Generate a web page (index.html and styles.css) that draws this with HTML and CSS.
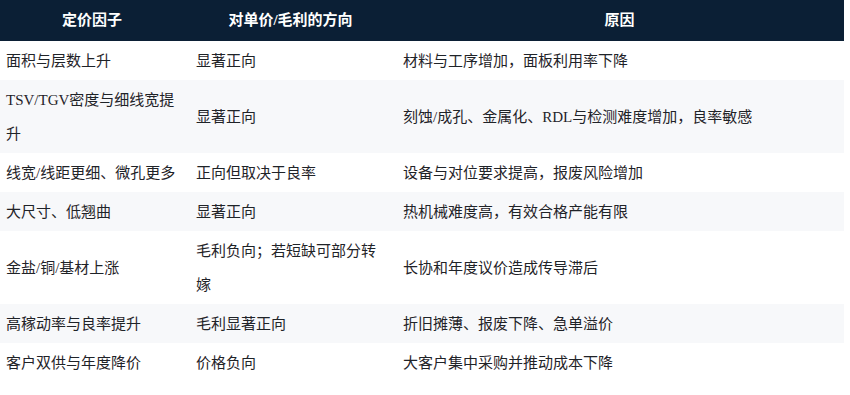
FILE: index.html
```html
<!DOCTYPE html>
<html lang="zh-CN">
<head>
<meta charset="utf-8">
<link rel="stylesheet" href="styles.css">
</head>
<body>
<table class="grid">
  <colgroup>
    <col class="c1"><col class="c2"><col class="c3">
  </colgroup>
  <thead>
    <tr><th class="p1">定价因子</th><th class="p2">对单价/毛利的方向</th><th class="p3">原因</th></tr>
  </thead>
  <tbody>
    <tr><td class="p1">面积与层数上升</td><td class="p2">显著正向</td><td class="p3">材料与工序增加，面板利用率下降</td></tr>
    <tr><td class="p1">TSV/TGV密度与细线宽提升</td><td class="p2">显著正向</td><td class="p3">刻蚀/成孔、金属化、RDL与检测难度增加，良率敏感</td></tr>
    <tr><td class="p1">线宽/线距更细、微孔更多</td><td class="p2">正向但取决于良率</td><td class="p3">设备与对位要求提高，报废风险增加</td></tr>
    <tr><td class="p1">大尺寸、低翘曲</td><td class="p2">显著正向</td><td class="p3">热机械难度高，有效合格产能有限</td></tr>
    <tr><td class="p1">金盐/铜/基材上涨</td><td class="p2">毛利负向；若短缺可部分转嫁</td><td class="p3">长协和年度议价造成传导滞后</td></tr>
    <tr><td class="p1">高稼动率与良率提升</td><td class="p2">毛利显著正向</td><td class="p3">折旧摊薄、报废下降、急单溢价</td></tr>
    <tr><td class="p1">客户双供与年度降价</td><td class="p2">价格负向</td><td class="p3">大客户集中采购并推动成本下降</td></tr>
  </tbody>
</table>
</body>
</html>
```
FILE: styles.css
```css
html, body {
  margin: 0;
  padding: 0;
  background: #ffffff;
}
.grid {
  width: 844px;
  border-collapse: collapse;
  table-layout: fixed;
  font-family: "Liberation Serif", "Noto Sans CJK SC", serif;
  font-size: 15px;
  color: #1f2328;
}
.c1 { width: 190px; }
.c2 { width: 207px; }
.c3 { width: 447px; }
.grid th {
  background: #0b1f35;
  color: #ffffff;
  font-weight: 700;
  text-align: center;
  height: 41px;
  padding: 0;
  line-height: 41px;
}
.grid td {
  line-height: 34px;
  padding: 2.5px 0;
  text-align: left;
  vertical-align: middle;
}
.p1, .p2 { padding-left: 6px !important; padding-right: 12px !important; }
.p3 { padding-left: 6px !important; padding-right: 8px !important; }
.grid tbody tr:nth-child(even) td {
  background: #f7f8fa;
}
```
